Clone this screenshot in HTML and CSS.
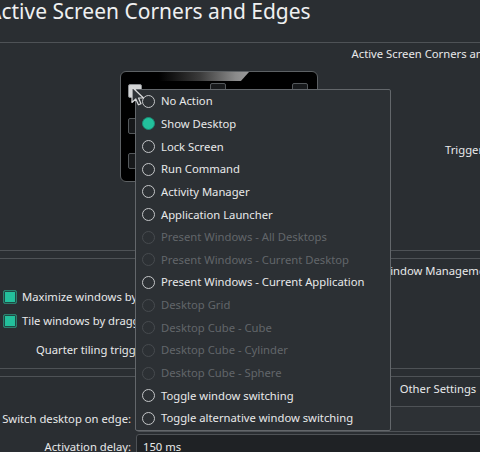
FILE: index.html
```html
<!DOCTYPE html>
<html lang="en">
<head>
    <meta charset="UTF-8">
    <meta name="viewport" content="width=device-width, initial-scale=1.0">
    <title>Active Screen Corners and Edges</title>
    <link rel="stylesheet" href="styles.css">
</head>
<body>
<div class="page">
    <h1 class="page-title">Active Screen Corners and Edges</h1>

    <div class="group group-edges">
        <div class="group-title">Active Screen Corners and Edges</div>
        <div class="edges-row">
            <div class="monitor">
                <div class="glare"></div>
                <span class="edge edge-tl active"></span>
                <span class="edge edge-t"></span>
                <span class="edge edge-tr"></span>
                <span class="edge edge-l"></span>
                <span class="edge edge-bl"></span>
            </div>
            <div class="edges-hint">Trigger an action by pushing the mouse cursor against the corresponding screen edge or corner</div>
        </div>
    </div>

    <div class="group group-wm">
        <div class="group-title">Window Management</div>
        <label class="check-row first"><span class="checkbox checked"></span>Maximize windows by dragging them to the top edge of the screen</label>
        <label class="check-row"><span class="checkbox checked"></span>Tile windows by dragging them to the left or right side of the screen</label>
        <div class="quarter-row">Quarter tiling triggered in the outer <span class="spin small">25%</span></div>
    </div>

    <div class="group group-other">
        <div class="group-title">Other Settings</div>
        <div class="form">
            <span class="form-label">Switch desktop on edge:</span>
            <div class="combo">Only when moving windows</div>
            <span class="form-label">Activation delay:</span>
            <div class="spin">150 ms</div>
        </div>
    </div>

    <!-- menu opened from the top left corner -->
    <div class="menu">
        <div class="menu-item"><span class="radio"></span>No Action</div>
        <div class="menu-item"><span class="radio checked"></span>Show Desktop</div>
        <div class="menu-item"><span class="radio"></span>Lock Screen</div>
        <div class="menu-item"><span class="radio"></span>Run Command</div>
        <div class="menu-item"><span class="radio"></span>Activity Manager</div>
        <div class="menu-item"><span class="radio"></span>Application Launcher</div>
        <div class="menu-item disabled"><span class="radio"></span>Present Windows - All Desktops</div>
        <div class="menu-item disabled"><span class="radio"></span>Present Windows - Current Desktop</div>
        <div class="menu-item"><span class="radio"></span>Present Windows - Current Application</div>
        <div class="menu-item disabled"><span class="radio"></span>Desktop Grid</div>
        <div class="menu-item disabled"><span class="radio"></span>Desktop Cube - Cube</div>
        <div class="menu-item disabled"><span class="radio"></span>Desktop Cube - Cylinder</div>
        <div class="menu-item disabled"><span class="radio"></span>Desktop Cube - Sphere</div>
        <div class="menu-item"><span class="radio"></span>Toggle window switching</div>
        <div class="menu-item"><span class="radio"></span>Toggle alternative window switching</div>
    </div>

    <svg class="cursor" width="14" height="21" viewBox="0 0 14 21">
        <path d="M1 1 L1 16.5 L4.8 13 L7.4 18.8 L10 17.7 L7.5 12 L12.5 12 Z" fill="#303438" stroke="#d8d9da" stroke-width="1.2" stroke-linejoin="round"/>
    </svg>
</div>
</body>
</html>
```

FILE: styles.css
```css
html, body {
    margin: 0;
    overflow: hidden;
    background-color: #2a2e32;
}

body {
    font-family: "Noto Sans", "DejaVu Sans", sans-serif;
    font-size: 11.25px;
    line-height: 16px;
    color: #e8e9ea;
}

.page {
    position: relative;
    width: 876px;
    height: 452px;
}

.page-title {
    margin: 0 0 0 -12px;
    height: 42px;
    font-size: 21px;
    font-weight: normal;
    line-height: 22px;
    color: #eff0f1;
    border-bottom: 1px solid #4e5256;
    white-space: nowrap;
}

/* groups */
.group-title {
    padding-top: 3px;
    text-align: center;
    white-space: nowrap;
}

.group-edges {
    height: 207px;
    border-bottom: 1px solid #4e5256;
}

.group-wm {
    margin-top: 7px;
    height: 109px;
    border-top: 1px solid #4e5256;
    border-bottom: 1px solid #4e5256;
}

.group-other {
    margin-top: 7px;
    border-top: 1px solid #4e5256;
}

.group-wm .group-title,
.group-other .group-title {
    padding-top: 3.5px;
}

/* screen preview */
.edges-row {
    display: flex;
    margin-top: 9px;
}

.monitor {
    position: relative;
    flex-shrink: 0;
    margin-left: 120px;
    width: 196px;
    height: 109px;
    background-color: #000;
    border: 1px solid #5d6164;
    border-radius: 6px;
    overflow: hidden;
}

.glare {
    position: absolute;
    left: 38px;
    top: 0;
    width: 90px;
    height: 9px;
    background: linear-gradient(to right, #000 0%, #3a3a3a 45%, #8a8a8a 85%, #9a9a9a 100%);
    clip-path: polygon(0 0, 100% 0, 91% 100%, 0 100%);
}

.edge {
    position: absolute;
    width: 14px;
    height: 14px;
    background-color: #17191b;
    border: 1px solid #54585b;
    border-radius: 2px;
}

.edge-tl { left: 7px; top: 12px; width: 12px; height: 12px; }
.edge-t { left: 89px; top: 11px; }
.edge-tr { left: 171px; top: 11px; }
.edge-l { left: 7px; top: 46px; }
.edge-bl { left: 7px; top: 81px; }

.edge.active {
    background-color: #d4d5d6;
    border-color: #8b8e91;
}

.edges-hint {
    flex-shrink: 0;
    margin-left: 127px;
    margin-top: 71px;
    white-space: nowrap;
}

/* window management */
.check-row {
    display: flex;
    align-items: center;
    gap: 5px;
    height: 24px;
    padding-left: 3px;
    white-space: nowrap;
}

.check-row.first {
    margin-top: 6px;
}

.checkbox {
    box-sizing: border-box;
    width: 14px;
    height: 14px;
    border: 1px solid #2b7f6d;
    border-radius: 2px;
    background-color: #23c09c;
    box-shadow: inset 0 0 0 1px #1f4a44;
}

.quarter-row {
    display: flex;
    align-items: center;
    gap: 6px;
    height: 28px;
    margin-top: 3px;
    padding-left: 36px;
    white-space: nowrap;
}

/* other settings */
.form {
    display: grid;
    grid-template-columns: 131px 420px;
    grid-auto-rows: 26px;
    column-gap: 5px;
    row-gap: 2px;
    margin-top: 9.5px;
}

.form-label {
    align-self: center;
    text-align: right;
    white-space: nowrap;
}

.combo, .spin {
    box-sizing: border-box;
    display: flex;
    align-items: center;
    padding-left: 6px;
    border: 1px solid #4e5256;
    border-radius: 3px;
}

.combo {
    background-color: #2d3135;
}

.spin {
    background-color: #1f2225;
}

.spin.small {
    width: 60px;
    height: 24px;
}

/* popup menu */
.menu {
    position: absolute;
    left: 135px;
    top: 89px;
    width: 254px;
    background-color: #2c3034;
    border: 1px solid #63676b;
    border-radius: 2px;
}

.menu-item {
    display: flex;
    align-items: center;
    gap: 6px;
    height: 22.65px;
    padding-left: 6px;
    white-space: nowrap;
}

.radio {
    box-sizing: border-box;
    width: 13px;
    height: 13px;
    border: 1px solid #c4c6c8;
    border-radius: 50%;
}

.radio.checked {
    background-color: #22c19c;
    border-color: #1b8e77;
}

.menu-item.disabled {
    color: #62666a;
}

.menu-item.disabled .radio {
    border-color: #474b4f;
}

.cursor {
    position: absolute;
    left: 131px;
    top: 86px;
}
```
